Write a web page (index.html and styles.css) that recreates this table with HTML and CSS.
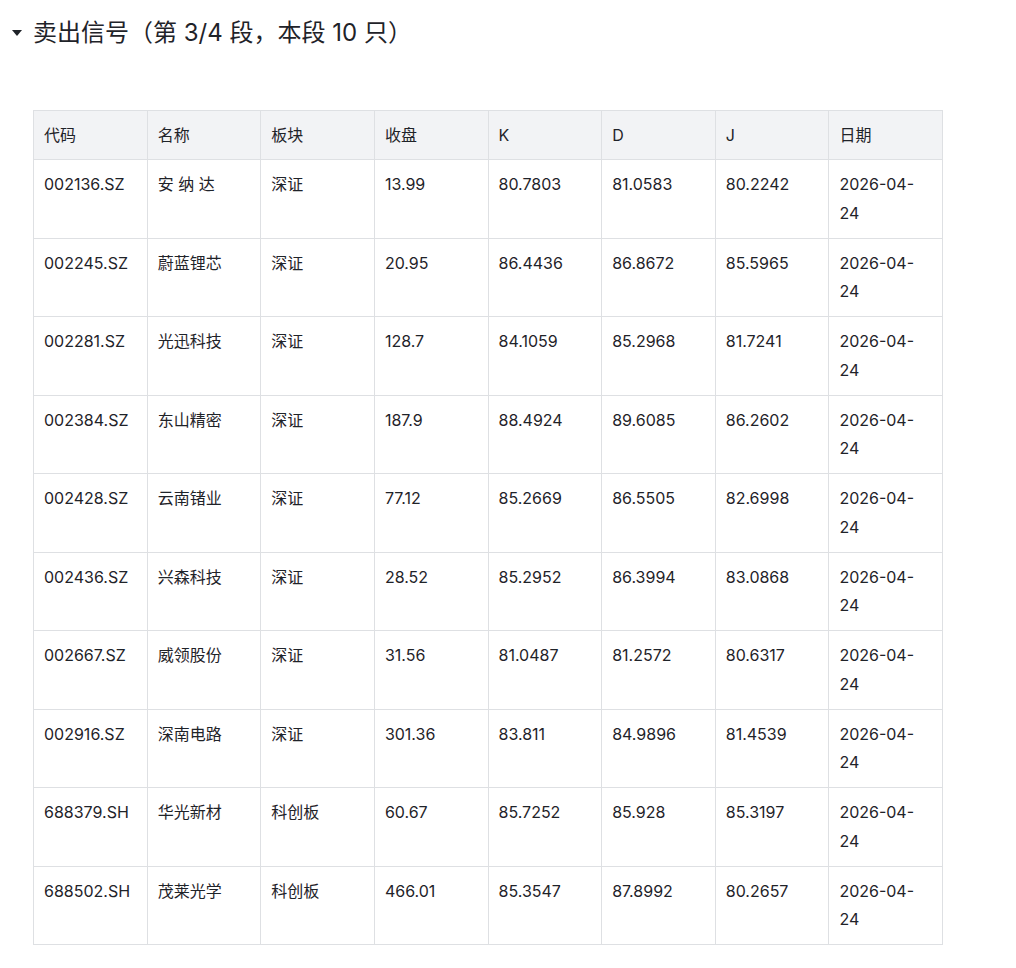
FILE: index.html
```html
<!DOCTYPE html>
<html lang="zh">
<head>
<meta charset="utf-8">
<link rel="stylesheet" href="styles.css">
</head>
<body>
<div class="page">
  <h2 class="section-title"><span class="caret"></span>卖出信号（第 3/4 段，本段 10 只）</h2>
  <table class="grid">
    <colgroup>
      <col><col><col><col><col><col><col><col>
    </colgroup>
    <thead>
      <tr><th>代码</th><th>名称</th><th>板块</th><th>收盘</th><th>K</th><th>D</th><th>J</th><th>日期</th></tr>
    </thead>
    <tbody>
      <tr><td>002136.SZ</td><td>安 纳 达</td><td>深证</td><td>13.99</td><td>80.7803</td><td>81.0583</td><td>80.2242</td><td>2026-04-24</td></tr>
      <tr><td>002245.SZ</td><td>蔚蓝锂芯</td><td>深证</td><td>20.95</td><td>86.4436</td><td>86.8672</td><td>85.5965</td><td>2026-04-24</td></tr>
      <tr><td>002281.SZ</td><td>光迅科技</td><td>深证</td><td>128.7</td><td>84.1059</td><td>85.2968</td><td>81.7241</td><td>2026-04-24</td></tr>
      <tr><td>002384.SZ</td><td>东山精密</td><td>深证</td><td>187.9</td><td>88.4924</td><td>89.6085</td><td>86.2602</td><td>2026-04-24</td></tr>
      <tr><td>002428.SZ</td><td>云南锗业</td><td>深证</td><td>77.12</td><td>85.2669</td><td>86.5505</td><td>82.6998</td><td>2026-04-24</td></tr>
      <tr><td>002436.SZ</td><td>兴森科技</td><td>深证</td><td>28.52</td><td>85.2952</td><td>86.3994</td><td>83.0868</td><td>2026-04-24</td></tr>
      <tr><td>002667.SZ</td><td>威领股份</td><td>深证</td><td>31.56</td><td>81.0487</td><td>81.2572</td><td>80.6317</td><td>2026-04-24</td></tr>
      <tr><td>002916.SZ</td><td>深南电路</td><td>深证</td><td>301.36</td><td>83.811</td><td>84.9896</td><td>81.4539</td><td>2026-04-24</td></tr>
      <tr><td>688379.SH</td><td>华光新材</td><td>科创板</td><td>60.67</td><td>85.7252</td><td>85.928</td><td>85.3197</td><td>2026-04-24</td></tr>
      <tr><td>688502.SH</td><td>茂莱光学</td><td>科创板</td><td>466.01</td><td>85.3547</td><td>87.8992</td><td>80.2657</td><td>2026-04-24</td></tr>
    </tbody>
  </table>
</div>
</body>
</html>
```

FILE: styles.css
```css
html, body {
  margin: 0;
  padding: 0;
  background: #ffffff;
}
body {
  font-family: Inter, "Noto Sans CJK SC", sans-serif;
  color: #1f2329;
}
.page {
  padding: 14px 0 0 33px;
}
.section-title {
  position: relative;
  margin: 0 0 58px 0;
  font-size: 24px;
  font-weight: 400;
  line-height: 38px;
  height: 38px;
}
.caret {
  position: absolute;
  left: -21px;
  top: 16px;
  width: 0;
  height: 0;
  border-left: 5px solid transparent;
  border-right: 5px solid transparent;
  border-top: 6px solid #1f2329;
}
.grid {
  border-collapse: collapse;
  table-layout: fixed;
  width: 910px;
  font-size: 16px;
  line-height: 28.75px;
}
.grid th, .grid td {
  border: 1px solid #dee0e3;
  padding: 10px;
  text-align: left;
  vertical-align: top;
  font-weight: 400;
}
.grid th {
  background: #f2f3f5;
  line-height: 28px;
}
```
